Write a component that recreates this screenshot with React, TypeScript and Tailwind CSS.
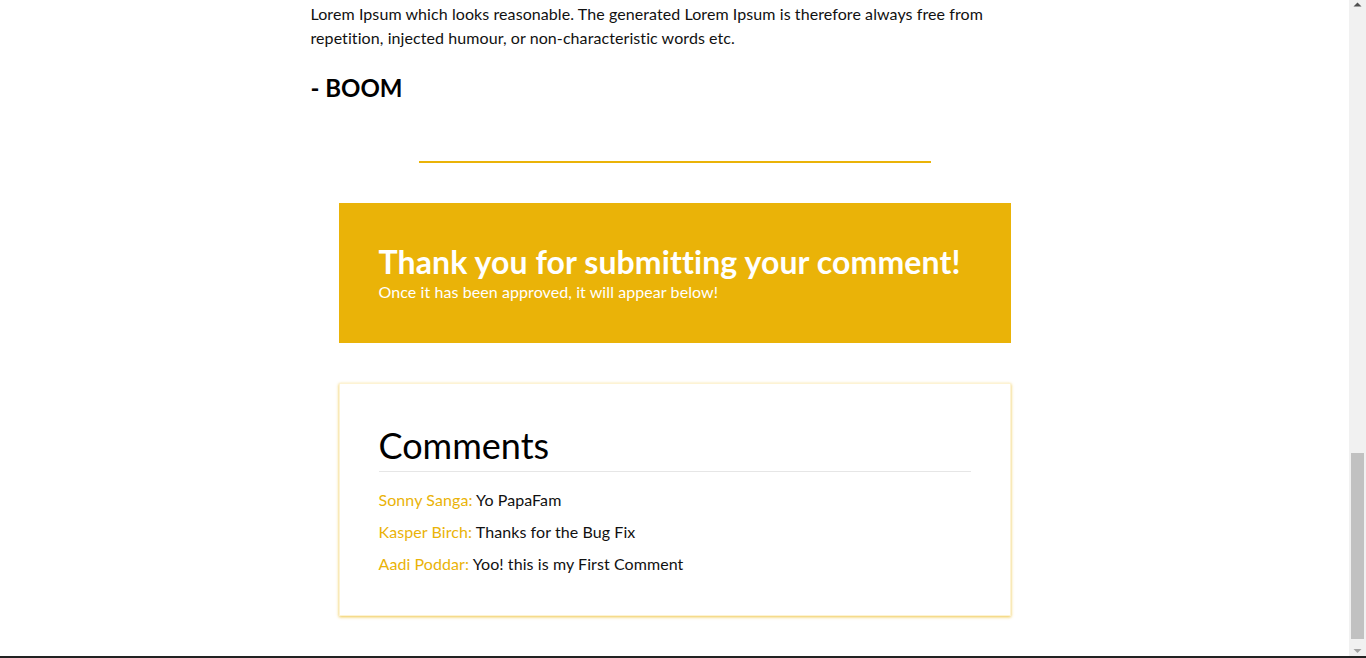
import React from 'react';

const comments = [
  { name: 'Sonny Sanga', text: 'Yo PapaFam' },
  { name: 'Kasper Birch', text: 'Thanks for the Bug Fix' },
  { name: 'Aadi Poddar', text: 'Yoo! this is my First Comment' },
];

function FakeScrollbar() {
  return (
    <div className="w-[17px] bg-[#f1f1f1] flex flex-col items-center">
      <svg width="17" height="17" viewBox="0 0 17 17" className="shrink-0">
        <path d="M4.5 6.5 L8.5 2.5 L12.5 6.5 Z" fill="#505050" />
      </svg>
      <div className="flex-1 w-full flex flex-col justify-end px-[2px]">
        <div className="h-[186px] bg-[#c1c1c1]" />
      </div>
      <svg width="17" height="17" viewBox="0 0 17 17" className="shrink-0">
        <path d="M4.5 10 L8.5 14 L12.5 10 Z" fill="#a3a3a3" />
      </svg>
    </div>
  );
}

export default function App() {
  return (
    <div className="h-[658px] flex flex-col overflow-hidden bg-white font-['Lato','Open_Sans',sans-serif] text-[#111] tracking-[0.08px]">
      <div className="flex-1 flex min-h-0">
        <main className="flex-1 flex flex-col items-center pt-[2px]">
          {/* Article tail */}
          <article className="w-[728px]">
            <p className="text-[16px] leading-[24px]">
              Lorem Ipsum which looks reasonable. The generated Lorem Ipsum is therefore always free from
              <br />
              repetition, injected humour, or non-characteristic words etc.
            </p>
            <h3 className="mt-[23px] text-[24px] leading-[29px] font-bold tracking-normal text-black">- BOOM</h3>
          </article>

          <hr className="mt-[59px] w-[512px] border-0 h-[2px] bg-[#eab308]" />

          {/* Submitted banner */}
          <section className="mt-[40px] w-[672px] h-[140px] bg-[#eab308] px-10 pt-[40px] text-white">
            <h2 className="text-[32px] leading-[37px] font-bold tracking-[0.1px]">Thank you for submitting your comment!</h2>
            <p className="text-[16px] leading-[24px]">Once it has been approved, it will appear below!</p>
          </section>

          {/* Comments */}
          <section className="mt-[40px] w-[672px] border border-[#fdf3d4] shadow-[0_1px_3px_rgba(234,179,8,0.75)] px-[39px] pt-[39px] pb-[39px]">
            <h2 className="text-[36px] leading-[44px] pb-1 border-b border-[#e6e6e6] tracking-normal text-black">Comments</h2>
            <ul className="mt-4 flex flex-col gap-2">
              {comments.map((c) => (
                <li key={c.name} className="text-[16px] leading-[24px]">
                  <span className="text-[#eab308]">{c.name}:</span> {c.text}
                </li>
              ))}
            </ul>
          </section>
        </main>
        <FakeScrollbar />
      </div>
      <div className="h-[2px] bg-[#222222]" />
    </div>
  );
}
